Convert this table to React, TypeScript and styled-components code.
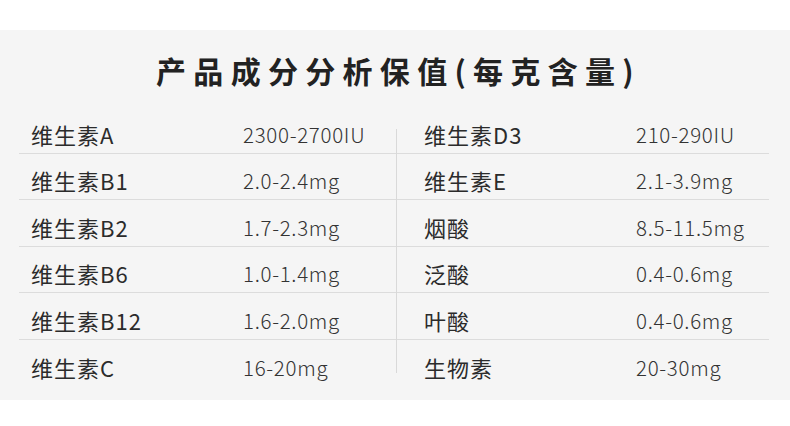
import styled, { createGlobalStyle } from "styled-components";

const GlobalStyle = createGlobalStyle`
  body {
    margin: 0;
    background: #ffffff;
    font-family: "Noto Sans CJK SC", "Noto Sans", sans-serif;
  }
`;

const Panel = styled.section`
  box-sizing: border-box;
  margin-top: 30px;
  height: 370px;
  padding-top: 20px;
  background: #f5f5f5;
`;

const Title = styled.h1`
  margin: 0;
  padding-left: 7px;
  height: 40px;
  line-height: 40px;
  text-align: center;
  font-size: 30px;
  font-weight: 700;
  letter-spacing: 7.3px;
  color: #222222;
`;

const Table = styled.div`
  position: relative;
  width: 750px;
  margin: 17px 0 0 19px;

  &::before {
    content: "";
    position: absolute;
    left: 377px;
    top: 22px;
    bottom: 13px;
    width: 1px;
    background: #d9d9d9;
  }
`;

const Row = styled.div`
  box-sizing: border-box;
  display: grid;
  grid-template-columns: 224px 153px 240px 133px;
  align-items: center;
  height: 46.5px;
  padding-top: 8px;
  border-bottom: 1px solid #dcdcdc;

  &:last-child {
    border-bottom: none;
  }
`;

const Name = styled.span<{ $indent: number }>`
  padding-left: ${(p) => p.$indent}px;
  font-size: 22px;
  font-weight: 400;
  letter-spacing: 1px;
  color: #2b2b2b;
  white-space: nowrap;
`;

const Value = styled.span`
  font-size: 20.5px;
  font-weight: 300;
  letter-spacing: 0.7px;
  color: #333333;
  white-space: nowrap;
`;

const rows: [string, string, string, string][] = [
  ["维生素A", "2300-2700IU", "维生素D3", "210-290IU"],
  ["维生素B1", "2.0-2.4mg", "维生素E", "2.1-3.9mg"],
  ["维生素B2", "1.7-2.3mg", "烟酸", "8.5-11.5mg"],
  ["维生素B6", "1.0-1.4mg", "泛酸", "0.4-0.6mg"],
  ["维生素B12", "1.6-2.0mg", "叶酸", "0.4-0.6mg"],
  ["维生素C", "16-20mg", "生物素", "20-30mg"],
];

export default function App() {
  return (
    <>
      <GlobalStyle />
      <Panel>
        <Title>产品成分分析保值(每克含量)</Title>
        <Table>
          {rows.map(([n1, v1, n2, v2]) => (
            <Row key={n1}>
              <Name $indent={12}>{n1}</Name>
              <Value>{v1}</Value>
              <Name $indent={28}>{n2}</Name>
              <Value>{v2}</Value>
            </Row>
          ))}
        </Table>
      </Panel>
    </>
  );
}
